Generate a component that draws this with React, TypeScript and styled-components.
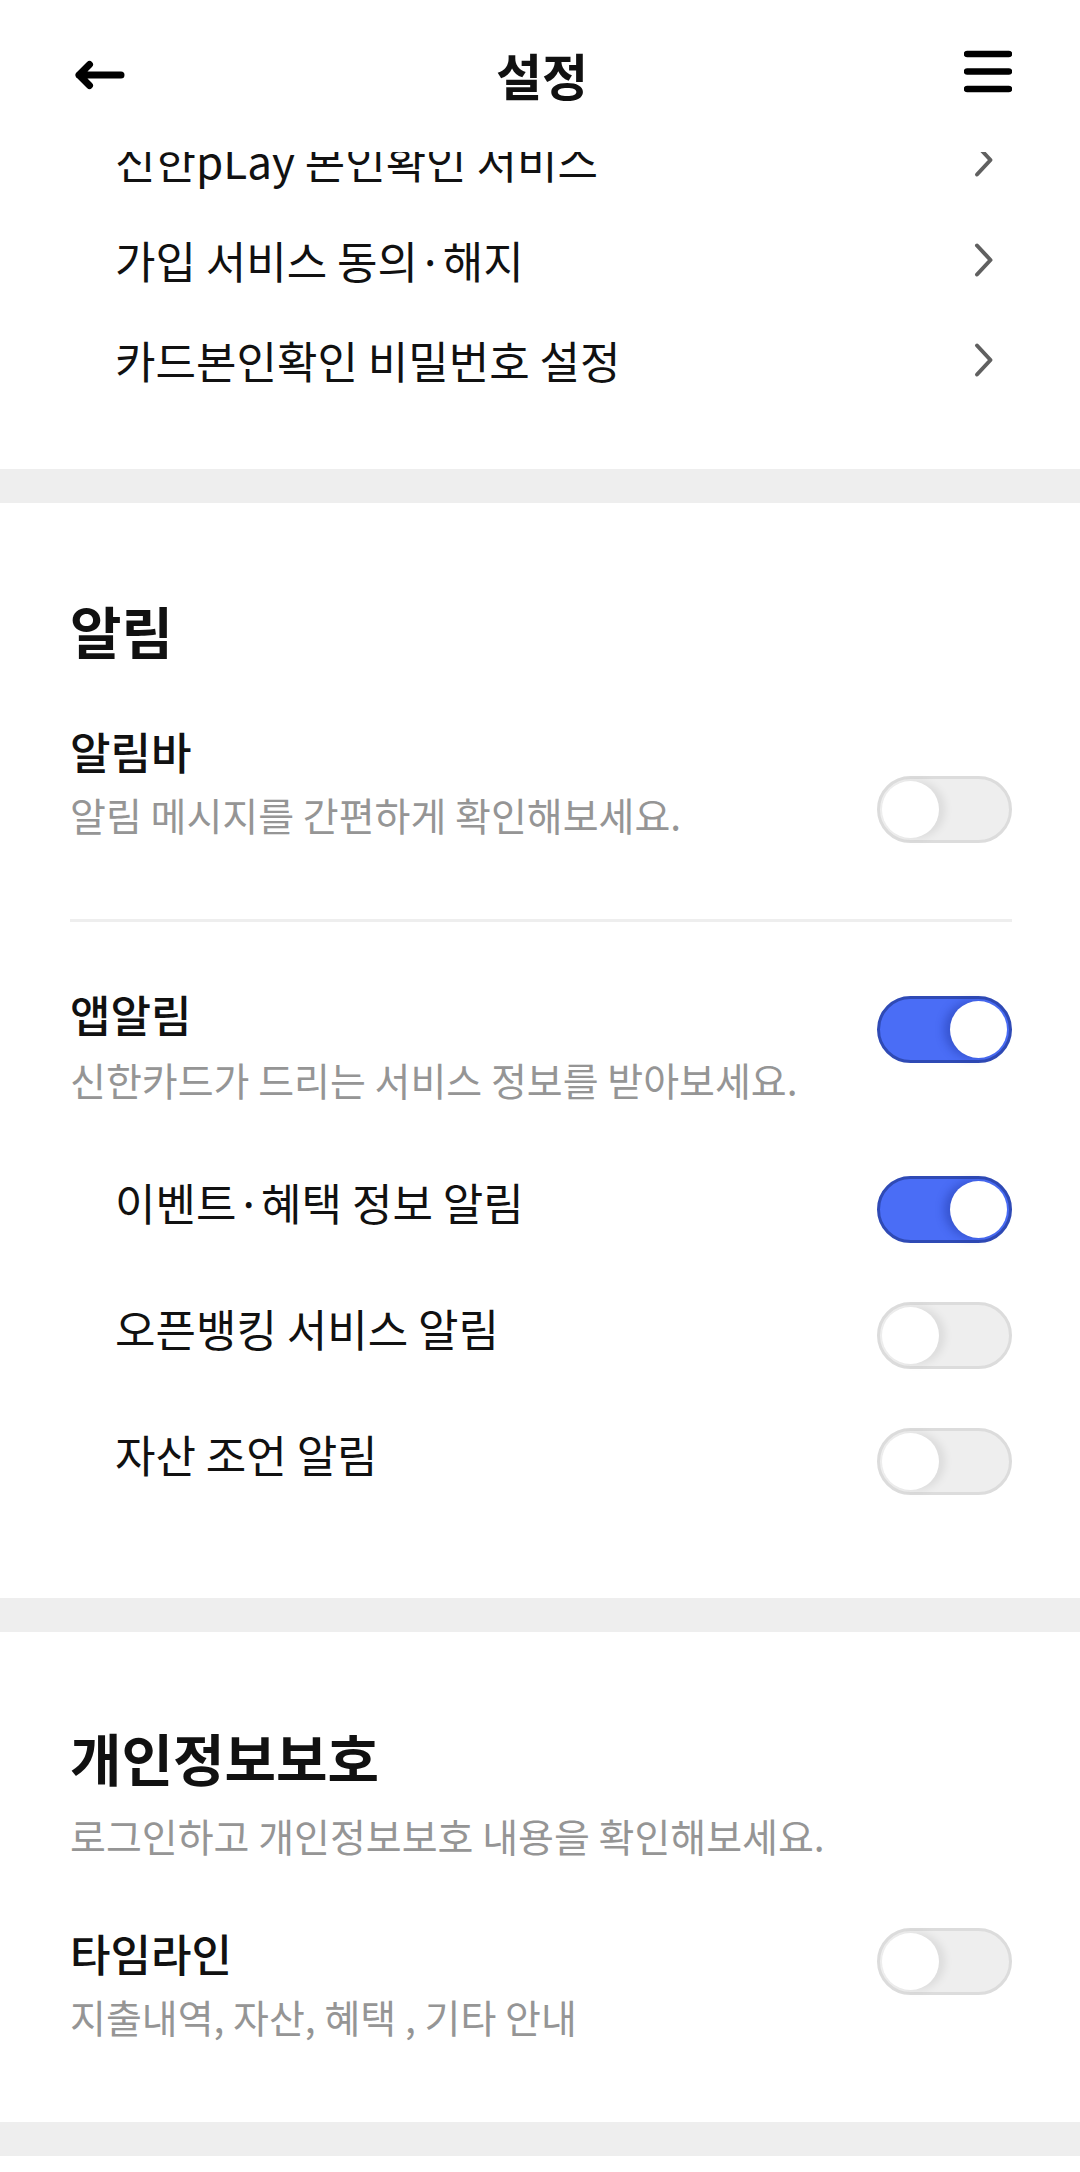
import React from "react";
import styled, { createGlobalStyle } from "styled-components";

const GlobalStyle = createGlobalStyle`
  html, body {
    margin: 0;
    padding: 0;
    background: #ffffff;
  }
  body {
    font-family: "Noto Sans CJK KR", "Noto Sans", sans-serif;
    color: #111111;
  }
  * {
    box-sizing: border-box;
  }
`;

const Page = styled.div`
  width: 1080px;
  min-height: 2172px;
  background: #eeeeee;
  display: flex;
  flex-direction: column;
  gap: 34px;
`;

const Header = styled.header`
  position: fixed;
  top: 0;
  left: 0;
  width: 1080px;
  height: 152px;
  background: #ffffff;
  z-index: 10;
  display: grid;
  grid-template-columns: 1fr auto 1fr;
  align-items: center;
  padding: 0 68px 0 72px;
`;

const IconButton = styled.button<{ $end?: boolean }>`
  border: 0;
  background: none;
  padding: 0;
  margin: 0;
  display: flex;
  justify-self: ${(p) => (p.$end ? "end" : "start")};
  margin-top: ${(p) => (p.$end ? "-8px" : "-3px")};
  cursor: pointer;
`;

const Title = styled.h1`
  margin: 0;
  margin-top: -4px;
  font-size: 50px;
  line-height: 1;
  font-weight: 700;
  color: #111111;
`;

const Section = styled.section<{ $top: number; $bottom: number; $grow?: boolean }>`
  background: #ffffff;
  padding: ${(p) => p.$top}px 68px ${(p) => p.$bottom}px 70px;
  flex-grow: ${(p) => (p.$grow ? 1 : 0)};
  display: flex;
  flex-direction: column;
`;

const LinkList = styled.div`
  display: flex;
  flex-direction: column;
`;

const LinkRow = styled.div`
  height: 100px;
  display: flex;
  align-items: center;
  justify-content: space-between;
  padding: 0 17px 2px 45px;
  font-size: 44px;
  color: #111111;
`;

const SectionTitle = styled.h2`
  margin: 0 0 8px;
  font-size: 56px;
  line-height: 56px;
  font-weight: 700;
  color: #111111;
`;

const SectionDesc = styled.p`
  margin: 18px 0 4px;
  font-size: 39px;
  line-height: 48px;
  color: #959595;
`;

const SettingRow = styled.div<{ $gap: number }>`
  margin-top: ${(p) => p.$gap}px;
  display: flex;
  justify-content: space-between;
  align-items: flex-start;
`;

const SettingText = styled.div`
  display: flex;
  flex-direction: column;
`;

const SettingLabel = styled.div`
  font-size: 44px;
  line-height: 50px;
  margin-bottom: 6px;
  font-weight: 500;
  color: #111111;
`;

const SettingDesc = styled.div<{ $gap: number }>`
  margin-top: ${(p) => p.$gap}px;
  margin-bottom: 4px;
  font-size: 39px;
  line-height: 48px;
  color: #959595;
`;

const Divider = styled.hr`
  margin: 76px 0 0;
  border: 0;
  height: 3px;
  background: #eeeeee;
`;

const SubList = styled.div`
  margin-top: 69px;
  display: flex;
  flex-direction: column;
  gap: 60px;
  padding-left: 45px;
`;

const SubRow = styled.div`
  height: 66px;
  display: flex;
  align-items: center;
  justify-content: space-between;
`;

const SubLabel = styled.span`
  font-size: 44px;
  line-height: 56px;
  padding-bottom: 15px;
  color: #111111;
`;

const Track = styled.div<{ $on: boolean; $offset: number }>`
  flex: none;
  margin-top: ${(p) => p.$offset}px;
  width: 135px;
  height: 67px;
  border-radius: 34px;
  border: 3px solid ${(p) => (p.$on ? "#2f4ab5" : "#dcdcdc")};
  background: ${(p) => (p.$on ? "#4a6df6" : "#eeeeee")};
  display: flex;
  align-items: center;
  justify-content: ${(p) => (p.$on ? "flex-end" : "flex-start")};
  padding: 0 2px;
`;

const Knob = styled.div<{ $on: boolean }>`
  width: 57px;
  height: 57px;
  border-radius: 50%;
  background: #ffffff;
  box-shadow: ${(p) =>
    p.$on ? "-6px 0 8px rgba(20, 40, 140, 0.35)" : "6px 0 8px rgba(0, 0, 0, 0.08)"};
`;

const Toggle = ({ on, offset = 0 }: { on: boolean; offset?: number }) => (
  <Track $on={on} $offset={offset} role="switch" aria-checked={on}>
    <Knob $on={on} />
  </Track>
);

const BackIcon = () => (
  <svg width="56" height="34" viewBox="0 0 56 34" fill="none">
    <path
      d="M7 17 H49 M17.5 6.5 L7 17 L17.5 27.5"
      stroke="#000"
      strokeWidth="7"
      strokeLinecap="round"
      strokeLinejoin="round"
    />
  </svg>
);

const MenuIcon = () => (
  <svg width="48" height="44" viewBox="0 0 48 44" fill="none">
    <path
      d="M3 4 H45 M3 21.5 H45 M3 39 H45"
      stroke="#000"
      strokeWidth="6.5"
      strokeLinecap="round"
    />
  </svg>
);

const Chevron = () => (
  <svg width="22" height="36" viewBox="0 0 22 36" fill="none">
    <path
      d="M4 3.5 L17.5 18 L4 32.5"
      stroke="#606060"
      strokeWidth="4"
      strokeLinecap="round"
      strokeLinejoin="round"
    />
  </svg>
);

const links = ["신한pLay 본인확인 서비스", "가입 서비스 동의·해지", "카드본인확인 비밀번호 설정"];

const subAlerts = [
  { label: "이벤트·혜택 정보 알림", on: true },
  { label: "오픈뱅킹 서비스 알림", on: false },
  { label: "자산 조언 알림", on: false },
];

export default function App() {
  return (
    <>
      <GlobalStyle />
      <Header>
        <IconButton aria-label="뒤로가기">
          <BackIcon />
        </IconButton>
        <Title>설정</Title>
        <IconButton $end aria-label="메뉴">
          <MenuIcon />
        </IconButton>
      </Header>
      <Page>
        <Section $top={111} $bottom={58}>
          <LinkList>
            {links.map((l) => (
              <LinkRow key={l}>
                <span>{l}</span>
                <Chevron />
              </LinkRow>
            ))}
          </LinkList>
        </Section>

        <Section $top={99} $bottom={104}>
          <SectionTitle>알림</SectionTitle>
          <SettingRow $gap={60}>
            <SettingText>
              <SettingLabel>알림바</SettingLabel>
              <SettingDesc $gap={8}>알림 메시지를 간편하게 확인해보세요.</SettingDesc>
            </SettingText>
            <Toggle on={false} offset={50} />
          </SettingRow>
          <Divider />
          <SettingRow $gap={67}>
            <SettingText>
              <SettingLabel>앱알림</SettingLabel>
              <SettingDesc $gap={10}>신한카드가 드리는 서비스 정보를 받아보세요.</SettingDesc>
            </SettingText>
            <Toggle on offset={7} />
          </SettingRow>
          <SubList>
            {subAlerts.map((s) => (
              <SubRow key={s.label}>
                <SubLabel>{s.label}</SubLabel>
                <Toggle on={s.on} />
              </SubRow>
            ))}
          </SubList>
        </Section>

        <Section $top={97} $bottom={78}>
          <SectionTitle>개인정보보호</SectionTitle>
          <SectionDesc>로그인하고 개인정보보호 내용을 확인해보세요.</SectionDesc>
          <SettingRow $gap={65}>
            <SettingText>
              <SettingLabel>타임라인</SettingLabel>
              <SettingDesc $gap={8}>지출내역, 자산, 혜택 , 기타 안내</SettingDesc>
            </SettingText>
            <Toggle on={false} />
          </SettingRow>
        </Section>

        <Section $top={15} $bottom={0} $grow />
      </Page>
    </>
  );
}
